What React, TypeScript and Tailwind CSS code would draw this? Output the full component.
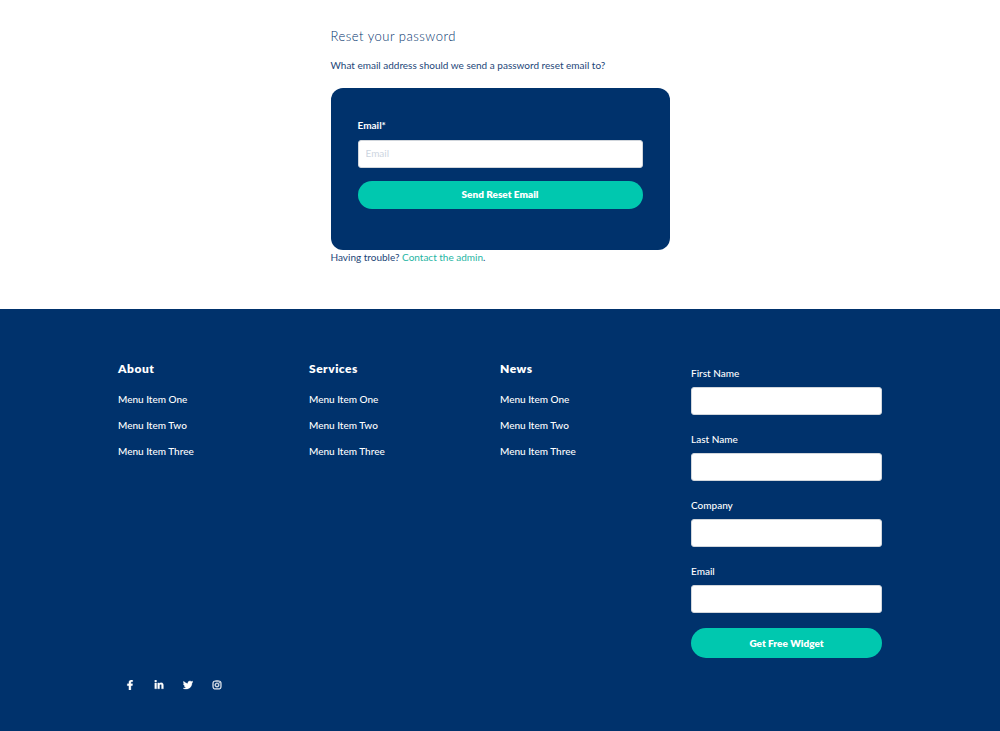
import { FaFacebookF, FaInstagram, FaLinkedinIn, FaTwitter } from "react-icons/fa";

const columns = ["About", "Services", "News"];
const menuItems = ["Menu Item One", "Menu Item Two", "Menu Item Three"];

const fields = [
  { id: "first-name", label: "First Name", type: "text" },
  { id: "last-name", label: "Last Name", type: "text" },
  { id: "company", label: "Company", type: "text" },
  { id: "footer-email", label: "Email", type: "email" },
];

const socials = [
  { name: "Facebook", Icon: FaFacebookF },
  { name: "LinkedIn", Icon: FaLinkedinIn },
  { name: "Twitter", Icon: FaTwitter },
  { name: "Instagram", Icon: FaInstagram },
];

function ResetPassword() {
  return (
    <main className="mx-auto w-full max-w-[339px] pt-7 pb-11">
      <h1 className="text-[13px] leading-4 font-light tracking-[0.5px]">Reset your password</h1>
      <p className="mt-3.5 mb-4 text-[10px] leading-[14px] text-[#1d4678]">
        What email address should we send a password reset email to?
      </p>
      <form className="rounded-xl bg-[#00326c] px-[27px] pt-[30px] pb-[41px]" onSubmit={(e) => e.preventDefault()}>
        <label htmlFor="reset-email" className="block text-[10px] leading-[14px] font-bold text-white">
          Email*
        </label>
        <input
          id="reset-email"
          type="email"
          placeholder="Email"
          className="mt-2 block h-7 w-full rounded-[3px] border border-[#d1d6dc] bg-white px-[7px] pb-0.5 text-[10px] text-[#00326c] placeholder:text-[#cdd5df]"
        />
        <button className="mt-[13px] block h-7 w-full rounded-full bg-[#00c8af] pb-0.5 text-[10px] font-extrabold text-white">
          Send Reset Email
        </button>
      </form>
      <p className="text-[10px] leading-[15px] text-[#1d4678]">
        Having trouble?{" "}
        <a href="#admin" className="text-[#1fb5a3]">
          Contact the admin
        </a>
        .
      </p>
    </main>
  );
}

function Footer() {
  return (
    <footer className="grow bg-[#00326c] px-6 pt-[52px] pb-8 text-white">
      <div className="mx-auto max-w-[764px]">
        <div className="grid grid-cols-2 sm:grid-cols-4">
          {columns.map((title) => (
            <nav key={title} aria-label={title}>
              <h2 className="text-[12px] leading-4 font-extrabold tracking-[0.5px]">{title}</h2>
              <ul className="mt-3.5 flex flex-col gap-2.5 text-[10px] leading-4 font-medium">
                {menuItems.map((item) => (
                  <li key={item}>
                    <a href="#menu">{item}</a>
                  </li>
                ))}
              </ul>
            </nav>
          ))}
          <form className="pt-1" onSubmit={(e) => e.preventDefault()}>
            <div className="flex flex-col gap-4">
              {fields.map(({ id, label, type }) => (
                <div key={id}>
                  <label htmlFor={id} className="block text-[10px] leading-4 font-medium">
                    {label}
                  </label>
                  <input
                    id={id}
                    type={type}
                    className="mt-1.5 block h-7 w-full rounded-[3px] border border-[#d1d6dc] bg-white px-[7px] text-[10px] text-[#00326c]"
                  />
                </div>
              ))}
            </div>
            <button className="mt-[15px] block h-[30px] w-full rounded-full bg-[#00c8af] text-[10px] font-extrabold">
              Get Free Widget
            </button>
          </form>
        </div>
        <div className="mt-[19px] flex gap-[5px]">
          {socials.map(({ name, Icon }) => (
            <a key={name} href="#social" aria-label={name} className="flex h-4 w-6 items-center justify-center">
              <Icon size={10} className="stroke-white stroke-[16px]" />
            </a>
          ))}
        </div>
      </div>
    </footer>
  );
}

export default function App() {
  return (
    <div className="flex min-h-screen flex-col bg-white font-['Lato','Open_Sans',sans-serif] text-[#00326c]">
      <ResetPassword />
      <Footer />
    </div>
  );
}
